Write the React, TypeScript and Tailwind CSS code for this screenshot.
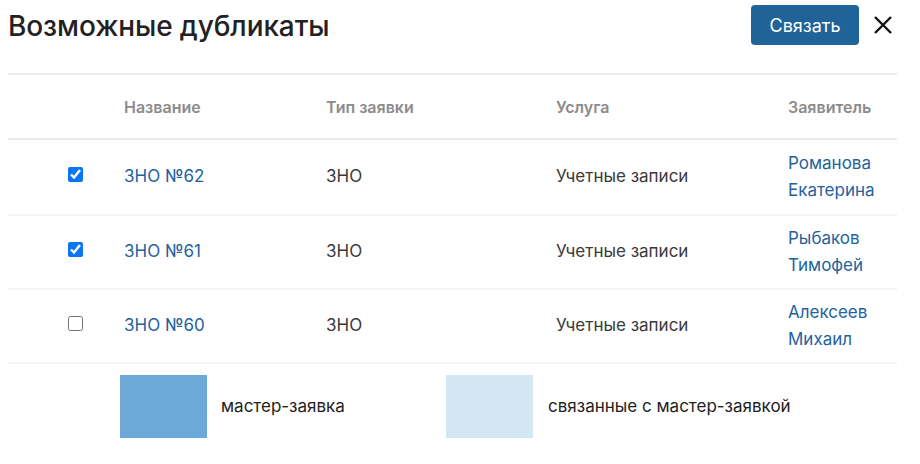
const rows = [
  { name: 'ЗНО №62', type: 'ЗНО', service: 'Учетные записи', applicant: ['Романова', 'Екатерина'], checked: true, h: 'h-[76px]' },
  { name: 'ЗНО №61', type: 'ЗНО', service: 'Учетные записи', applicant: ['Рыбаков', 'Тимофей'], checked: true, h: 'h-[74px]' },
  { name: 'ЗНО №60', type: 'ЗНО', service: 'Учетные записи', applicant: ['Алексеев', 'Михаил'], checked: false, h: 'h-[74px]' },
];

const cols = 'grid grid-cols-[116px_202px_230px_232px_1fr] items-center';

export default function App() {
  return (
    <div className="w-[920px] h-[464px] bg-white font-['Inter',sans-serif] overflow-hidden">
      {/* Header */}
      <div className="flex items-center h-[50px] pl-2 pr-[27px] pt-[1px]">
        <h1 className="text-[28px] font-medium text-[#222] tracking-[-0.1px]">Возможные дубликаты</h1>
        <div className="ml-auto flex items-center gap-[14px]">
          <button className="w-[108px] h-[40px] rounded-[4px] bg-[#1f6399] text-white text-[18px] mb-[1px]">
            Связать
          </button>
          <svg width="20" height="20" viewBox="0 0 20 20" className="mb-[1px]">
            <path d="M2 2L18 18M18 2L2 18" stroke="#111" strokeWidth="2.4" strokeLinecap="butt" />
          </svg>
        </div>
      </div>

      <div className="ml-2 w-[889px] mt-[23px]">
        <div className={`${cols} h-[67px] border-y-2 border-[#ececec] text-[16px] font-semibold text-[#8c8c8c]`}>
          <div />
          <div>Название</div>
          <div>Тип заявки</div>
          <div>Услуга</div>
          <div>Заявитель</div>
        </div>
        {rows.map((r) => (
          <div key={r.name} className={`${cols} ${r.h} border-b-2 border-[#f4f4f4] text-[17px]`}>
            <div className="pl-[60px] flex items-center mb-[5px]">
              <input type="checkbox" defaultChecked={r.checked} className="w-[15px] h-[15px] m-0 accent-[#0b76f2]" />
            </div>
            <div className="text-[#24629e]">{r.name}</div>
            <div className="text-[#3a3a3a]">{r.type}</div>
            <div className="text-[#3a3a3a]">{r.service}</div>
            <div className="text-[#24629e] leading-[27px]">
              {r.applicant.map((a) => (
                <div key={a}>{a}</div>
              ))}
            </div>
          </div>
        ))}
      </div>

      {/* Legend */}
      <div className="flex items-center mt-[11px] pl-[120px] text-[17px] text-[#222]">
        <div className="flex items-center w-[326px]">
          <div className="w-[87px] h-[63px] bg-[#6ca8d8]" />
          <span className="ml-[14px]">мастер-заявка</span>
        </div>
        <div className="flex items-center">
          <div className="w-[87px] h-[63px] bg-[#d5e6f3]" />
          <span className="ml-[15px]">связанные с мастер-заявкой</span>
        </div>
      </div>
    </div>
  );
}
